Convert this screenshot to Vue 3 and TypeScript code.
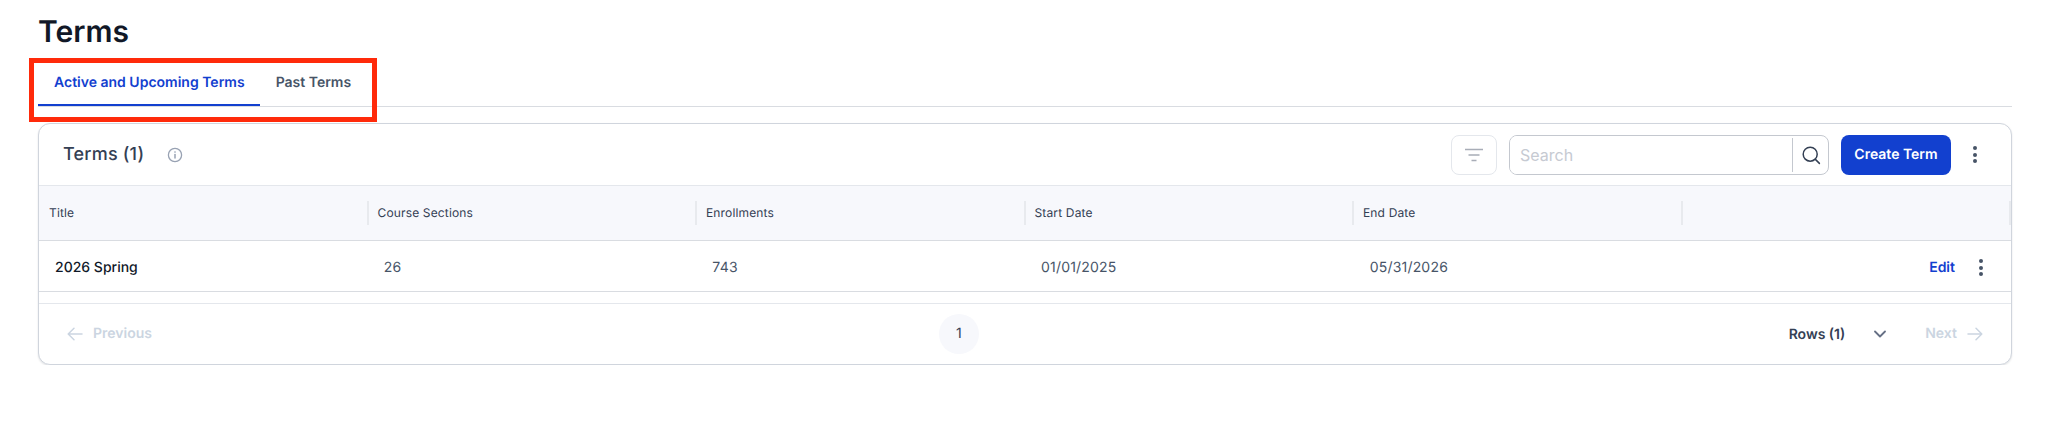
<script setup lang="ts">
const columns = ['Title', 'Course Sections', 'Enrollments', 'Start Date', 'End Date', '']
const row = { title: '2026 Spring', sections: '26', enrollments: '743', start: '01/01/2025', end: '05/31/2026' }
</script>

<template>
  <div class="page">
    <h1 class="page__title">Terms</h1>

    <div class="tabs">
      <button class="tab tab--active">Active and Upcoming Terms</button>
      <button class="tab">Past Terms</button>
      <div class="tabs__highlight"></div>
    </div>

    <section class="card">
      <header class="toolbar">
        <div class="toolbar__heading">
          <h2 class="toolbar__title">Terms (1)</h2>
          <svg class="info" viewBox="0 0 16 16" fill="none" stroke="#98a2b3" stroke-width="1.3">
            <circle cx="8" cy="8" r="6.6" />
            <path d="M8 7.4v3.6" stroke-linecap="round" stroke-width="1.5" />
            <circle cx="8" cy="5" r="0.5" fill="#98a2b3" stroke-width="0.6" />
          </svg>
        </div>
        <div class="toolbar__actions">
          <button class="filter" aria-label="Filter">
            <svg viewBox="0 0 20 14" width="20" height="14" fill="none" stroke="#a8adb7" stroke-width="1.6">
              <path d="M1 1.5h18M4.5 7h11M7.5 12.5h5" />
            </svg>
          </button>
          <div class="search">
            <input class="search__input" placeholder="Search" />
            <span class="search__icon">
              <svg viewBox="0 0 20 20" width="20" height="20" fill="none" stroke="#344054" stroke-width="1.5" stroke-linecap="round">
                <circle cx="9.2" cy="9.2" r="7" />
                <path d="M14.4 14.4l4 4" />
              </svg>
            </span>
          </div>
          <button class="primary">Create Term</button>
          <span class="kebab kebab--toolbar"><i></i><i></i><i></i></span>
        </div>
      </header>

      <div class="grid grid--head">
        <div v-for="(col, i) in columns" :key="i" class="grid__th">{{ col }}</div>
      </div>

      <div class="grid grid--row">
        <div class="grid__td grid__td--title">{{ row.title }}</div>
        <div class="grid__td">{{ row.sections }}</div>
        <div class="grid__td">{{ row.enrollments }}</div>
        <div class="grid__td">{{ row.start }}</div>
        <div class="grid__td">{{ row.end }}</div>
        <div class="grid__td grid__td--actions">
          <a class="edit">Edit</a>
          <span class="kebab"><i></i><i></i><i></i></span>
        </div>
      </div>

      <footer class="pager">
        <button class="pager__btn">
          <svg viewBox="0 0 16 14" width="16" height="14" fill="none" stroke="#cbd5e1" stroke-width="1.5" stroke-linecap="round" stroke-linejoin="round">
            <path d="M15 7H1.5M7 1.2L1.2 7 7 12.8" />
          </svg>
          Previous
        </button>
        <span class="pager__page">1</span>
        <div class="pager__right">
          <div class="pager__rows">
            <span>Rows (1)</span>
            <svg viewBox="0 0 12 8" width="12" height="8" fill="none" stroke="#667085" stroke-width="1.8" stroke-linecap="round" stroke-linejoin="round">
              <path d="M1 1.5l5 5 5-5" />
            </svg>
          </div>
          <button class="pager__btn pager__btn--next">
            Next
            <svg viewBox="0 0 16 14" width="16" height="14" fill="none" stroke="#cbd5e1" stroke-width="1.5" stroke-linecap="round" stroke-linejoin="round">
              <path d="M1 7h13.5M9 1.2L14.8 7 9 12.8" />
            </svg>
          </button>
        </div>
      </footer>
    </section>
  </div>
</template>

<style>
body {
  background: #fff;
}
</style>

<style scoped>
.page {
  padding: 14px 35px 0 38px;
  font-family: Inter, 'Noto Sans', sans-serif;
  text-rendering: geometricPrecision;
  color: #101828;
}

.page__title {
  margin: 0;
  height: 36px;
  font-size: 30px;
  line-height: 36px;
  font-weight: 600;
  color: #111827;
}

.tabs {
  position: relative;
  display: flex;
  height: 57px;
  box-sizing: border-box;
  padding-top: 10px;
  border-bottom: 1px solid #d9dce1;
}

.tab {
  height: 46px;
  padding: 0 16px;
  border: 0;
  background: none;
  font: 600 14px/20px Inter, sans-serif;
  text-rendering: geometricPrecision;
  color: #475467;
}

.tab--active {
  color: #1240cf;
  border-bottom: 2px solid #1240cf;
  padding: 2px 15px 0 16px;
}

.tabs__highlight {
  position: absolute;
  left: -9px;
  top: 8px;
  width: 348px;
  height: 64px;
  box-sizing: border-box;
  border: 5px solid #ff2a0a;
  pointer-events: none;
}

.card {
  margin-top: 16px;
  border: 1px solid #d0d5dd;
  border-radius: 12px;
  background: #fff;
  box-shadow: 0 1px 2px rgba(16, 24, 40, 0.12);
  overflow: hidden;
}

.toolbar {
  display: flex;
  align-items: center;
  justify-content: space-between;
  height: 61px;
  box-sizing: border-box;
  padding: 0 34px 0 24px;
}

.toolbar__heading {
  display: flex;
  align-items: center;
  gap: 23px;
}

.toolbar__title {
  margin: 0;
  font-size: 18px;
  line-height: 28px;
  font-weight: 500;
  letter-spacing: 0.2px;
  color: #344054;
}

.info {
  width: 16px;
  height: 16px;
}

.toolbar__actions {
  display: flex;
  align-items: center;
}

.filter {
  display: flex;
  align-items: center;
  justify-content: center;
  width: 46px;
  height: 40px;
  padding: 0;
  border: 1px solid #e4e7ec;
  border-radius: 8px;
  background: #fff;
}

.search {
  display: flex;
  width: 320px;
  height: 40px;
  box-sizing: border-box;
  margin-left: 12px;
  border: 1px solid #c4c8cf;
  border-radius: 8px;
  overflow: hidden;
}

.search__input {
  flex: 1;
  min-width: 0;
  padding: 0 10px;
  border: 0;
  outline: none;
  font: 400 16px Inter, sans-serif;
}

.search__input::placeholder {
  color: #c6cad2;
}

.search__icon {
  display: flex;
  align-items: center;
  justify-content: center;
  width: 35px;
  border-left: 1px solid #c4c8cf;
  margin: 2px 0;
}

.primary {
  width: 110px;
  height: 40px;
  margin-left: 12px;
  border: 0;
  border-radius: 8px;
  background: #1240cf;
  color: #fff;
  font: 600 14px Inter, sans-serif;
  text-rendering: geometricPrecision;
}

.kebab {
  display: inline-flex;
  flex-direction: column;
  gap: 2.5px;
}

.kebab i {
  display: block;
  width: 4px;
  height: 4px;
  border-radius: 50%;
  background: #475467;
}

.kebab--toolbar {
  margin-left: 22px;
}

.grid {
  display: grid;
  grid-template-columns: repeat(6, 1fr);
}

.grid--head {
  height: 56px;
  padding-left: 1px;
  background: #f7f8fc;
  border-top: 1px solid #e4e7ec;
  border-bottom: 1px solid #d9dce1;
  box-sizing: border-box;
  align-items: center;
}

.grid__th {
  height: 24px;
  padding-left: 9px;
  border-right: 2px solid #e8eaee;
  font-size: 12px;
  line-height: 24px;
  font-weight: 400;
  letter-spacing: 0.15px;
  color: #344054;
}

.grid--row {
  height: 51px;
  box-sizing: border-box;
  padding-top: 3px;
  align-items: center;
  border-bottom: 1px solid #d9dce1;
}

.grid__td {
  padding-left: 16px;
  font-size: 14px;
  line-height: 20px;
  letter-spacing: 0.2px;
  color: #475467;
}

.grid__td--title {
  font-weight: 500;
  letter-spacing: 0;
  color: #101828;
}

.grid__td--actions {
  display: flex;
  align-items: center;
  justify-content: flex-end;
  gap: 24px;
  padding-right: 28px;
}

.edit {
  font-size: 14px;
  font-weight: 600;
  letter-spacing: 0;
  color: #1240cf;
}

.pager {
  display: flex;
  align-items: center;
  justify-content: space-between;
  height: 61px;
  box-sizing: border-box;
  margin-top: 11px;
  padding: 0 16px;
  border-top: 1px solid #e4e7ec;
}

.pager__btn {
  display: flex;
  align-items: center;
  gap: 10px;
  padding: 0 12px;
  border: 0;
  background: none;
  font: 600 14px Inter, sans-serif;
  text-rendering: geometricPrecision;
  color: #cbd5e1;
  margin-top: -1px;
}

.pager__page {
  width: 40px;
  height: 40px;
  border-radius: 50%;
  background: #f7f8fc;
  font-size: 14px;
  line-height: 40px;
  text-align: center;
  color: #344054;
}

.pager__right {
  display: flex;
  align-items: center;
}

.pager__rows {
  display: flex;
  align-items: center;
  gap: 29px;
  padding-left: 35px;
  margin-right: 27px;
  font-size: 14px;
  font-weight: 600;
  color: #344054;
}
</style>
